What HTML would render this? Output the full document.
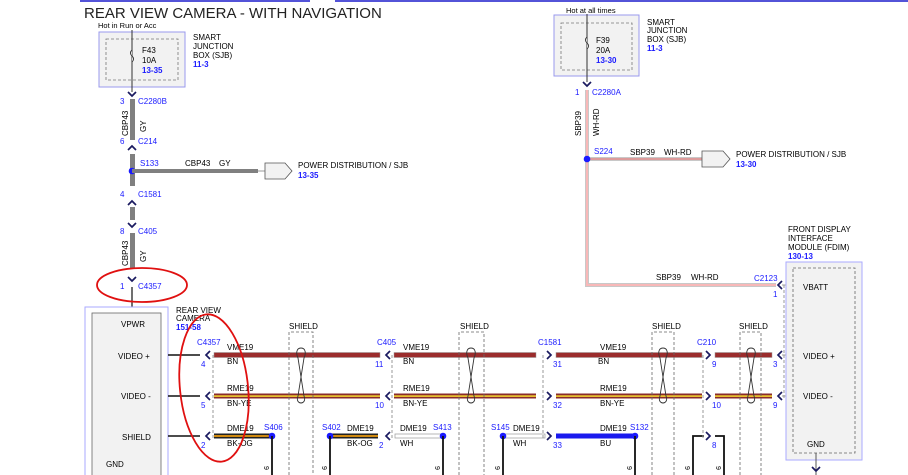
<!DOCTYPE html>
<html><head><meta charset="utf-8"><style>
html,body{margin:0;padding:0;background:#fff;width:908px;height:475px;overflow:hidden}
svg{display:block;font-family:"Liberation Sans",sans-serif}
.t{font-size:8px;fill:#000}
.b{font-size:8px;fill:#1a1aff}
.bb{font-size:8px;fill:#1a1aff;font-weight:bold}
</style></head><body>
<svg width="908" height="475" viewBox="0 0 908 475" xmlns="http://www.w3.org/2000/svg">
<defs>
<g id="arrL"><path d="M4,-4 L0,0 L4,4" fill="none" stroke="#1a1a60" stroke-width="1.7"/></g>
<g id="arrR"><path d="M-4,-4 L0,0 L-4,4" fill="none" stroke="#1a1a60" stroke-width="1.7"/></g>
<g id="arrD"><path d="M-4,-4 L0,0 L4,-4" fill="none" stroke="#1a1a60" stroke-width="1.7"/></g>
<g id="arrU"><path d="M-4,4 L0,0 L4,4" fill="none" stroke="#1a1a60" stroke-width="1.7"/></g>
</defs>
<line x1="80" y1="1" x2="310" y2="1" stroke="#1a1acc" stroke-width="1.5"/>
<line x1="335" y1="1" x2="908" y2="1" stroke="#1a1acc" stroke-width="1.5"/>
<text x="84" y="18" style="font-size:15px" fill="#222">REAR VIEW CAMERA - WITH NAVIGATION</text>

<text x="98" y="28" class="t" style="font-size:7.5px">Hot in Run or Acc</text>
<rect x="99" y="32" width="86" height="55" fill="#f2f2f2" stroke="#9999ee" stroke-width="1"/>
<rect x="106" y="39" width="72" height="41" fill="none" stroke="#777" stroke-dasharray="3,2" stroke-width="0.8"/>
<line x1="132" y1="30" x2="132" y2="92" stroke="#333" stroke-width="1"/>
<path d="M132,50 q-3,3 0,6 q3,3 0,6" fill="#f2f2f2" stroke="#333"/>
<text x="142" y="53" class="t">F43</text><text x="142" y="63" class="t">10A</text><text x="142" y="73" class="bb">13-35</text>
<text x="193" y="40" class="t">SMART</text><text x="193" y="49" class="t">JUNCTION</text><text x="193" y="58" class="t">BOX (SJB)</text><text x="193" y="67" class="bb">11-3</text>
<use href="#arrD" x="132" y="96"/>
<text x="120" y="104" class="b">3</text><text x="138" y="104" class="b">C2280B</text>
<rect x="130" y="99" width="5" height="41" fill="#808080"/>
<text class="t" transform="translate(128,136) rotate(-90)">CBP43</text>
<text class="t" transform="translate(146,132) rotate(-90)">GY</text>
<text x="120" y="144" class="b">6</text><text x="138" y="144" class="b">C214</text>
<use href="#arrU" x="132" y="146"/>
<rect x="130" y="154" width="5" height="32" fill="#808080"/>
<circle cx="132" cy="171" r="3.3" fill="#1a1aff"/>
<text x="140" y="166" class="b">S133</text>
<rect x="132" y="169" width="126" height="4" fill="#808080"/>
<line x1="258" y1="171" x2="265" y2="171" stroke="#999"/>
<path d="M265,163 L285,163 L292,171 L285,179 L265,179 Z" fill="#f2f2f2" stroke="#555" stroke-width="0.8"/>
<text x="185" y="166" class="t">CBP43</text><text x="219" y="166" class="t">GY</text>
<text x="298" y="168" class="t">POWER DISTRIBUTION / SJB</text><text x="298" y="178" class="bb">13-35</text>
<text x="120" y="197" class="b">4</text><text x="138" y="197" class="b">C1581</text>
<use href="#arrU" x="132" y="201"/>
<rect x="130" y="207" width="5" height="13" fill="#808080"/>
<use href="#arrD" x="132" y="227"/>
<text x="120" y="234" class="b">8</text><text x="138" y="234" class="b">C405</text>
<rect x="130" y="233" width="5" height="36" fill="#808080"/>
<text class="t" transform="translate(128,266) rotate(-90)">CBP43</text>
<text class="t" transform="translate(146,262) rotate(-90)">GY</text>
<use href="#arrD" x="132" y="281"/>
<text x="120" y="289" class="b">1</text><text x="138" y="289" class="b">C4357</text>
<line x1="132" y1="287" x2="132" y2="307" stroke="#111" stroke-width="1.2"/>
<ellipse cx="142" cy="285" rx="45" ry="17" fill="none" stroke="#e01010" stroke-width="1.8"/>

<rect x="85" y="307" width="83" height="170" fill="#fff" stroke="#aaaaff" stroke-width="1"/>
<rect x="92" y="313" width="69" height="165" fill="#f2f2f2" stroke="#666" stroke-width="0.8"/>
<text x="121" y="327" class="t">VPWR</text>
<text x="118" y="359" class="t">VIDEO +</text>
<text x="121" y="399" class="t">VIDEO -</text>
<text x="122" y="440" class="t">SHIELD</text>
<text x="106" y="467" class="t">GND</text>
<text x="176" y="313" class="t">REAR VIEW</text><text x="176" y="321" class="t">CAMERA</text><text x="176" y="330" class="bb">151-58</text>
<text x="197" y="345" class="b">C4357</text>
<g stroke="#111" stroke-width="1.6"><line x1="168" y1="355" x2="200" y2="355"/><line x1="168" y1="396" x2="200" y2="396"/><line x1="168" y1="436" x2="200" y2="436"/></g>
<use href="#arrL" x="206" y="355"/><use href="#arrL" x="206" y="396"/><use href="#arrL" x="206" y="436"/>
<text x="201" y="367" class="b">4</text><text x="201" y="408" class="b">5</text><text x="201" y="448" class="b">2</text>
<line x1="213" y1="355" x2="213" y2="440" stroke="#999" stroke-dasharray="3,2"/>

<g>
<rect x="214" y="352.5" width="166" height="5" fill="#9b2c2c" stroke="#999" stroke-width="0.5"/>
<rect x="394" y="352.5" width="142" height="5" fill="#9b2c2c" stroke="#999" stroke-width="0.5"/>
<rect x="556" y="352.5" width="146" height="5" fill="#9b2c2c" stroke="#999" stroke-width="0.5"/>
<rect x="715" y="352.5" width="57" height="5" fill="#9b2c2c" stroke="#999" stroke-width="0.5"/>
<rect x="214" y="393.5" width="166" height="5" fill="#8a2c2c"/><rect x="214" y="395.3" width="166" height="1.6" fill="#f0d030"/>
<rect x="394" y="393.5" width="142" height="5" fill="#8a2c2c"/><rect x="394" y="395.3" width="142" height="1.6" fill="#f0d030"/>
<rect x="556" y="393.5" width="146" height="5" fill="#8a2c2c"/><rect x="556" y="395.3" width="146" height="1.6" fill="#f0d030"/>
<rect x="715" y="393.5" width="57" height="5" fill="#8a2c2c"/><rect x="715" y="395.3" width="57" height="1.6" fill="#f0d030"/>
<rect x="214" y="433.5" width="58" height="5" fill="#222"/><rect x="214" y="435" width="58" height="2" fill="#d08a10"/>
<rect x="332" y="433.5" width="46" height="5" fill="#222"/><rect x="332" y="435" width="46" height="2" fill="#d08a10"/>
<rect x="395" y="434" width="48" height="4" fill="#fff" stroke="#999" stroke-width="0.7"/>
<rect x="503" y="434" width="42" height="4" fill="#fff" stroke="#999" stroke-width="0.7"/>
<rect x="556" y="433.5" width="79" height="5" fill="#1a1aee"/>
</g>
<circle cx="272" cy="436" r="3.3" fill="#1a1aff"/><circle cx="330" cy="436" r="3.3" fill="#1a1aff"/>
<circle cx="443" cy="436" r="3.3" fill="#1a1aff"/><circle cx="503" cy="436" r="3.3" fill="#1a1aff"/>
<circle cx="635" cy="436" r="3.3" fill="#1a1aff"/>
<g stroke="#111" stroke-width="1.8" fill="none">
<line x1="272" y1="436" x2="272" y2="475"/><line x1="330" y1="436" x2="330" y2="475"/>
<line x1="443" y1="436" x2="443" y2="475"/><line x1="503" y1="436" x2="503" y2="475"/>
<line x1="635" y1="436" x2="635" y2="475"/>
<path d="M693,475 L693,436 L704,436"/><path d="M715,436 L724,436 L724,475"/>
</g>
<g class="t" style="font-size:7px">
<text transform="translate(264,466) rotate(90)">9</text><text transform="translate(322,466) rotate(90)">9</text>
<text transform="translate(435,466) rotate(90)">9</text><text transform="translate(495,466) rotate(90)">9</text>
<text transform="translate(627,466) rotate(90)">9</text><text transform="translate(685,466) rotate(90)">9</text>
<text transform="translate(716,466) rotate(90)">9</text>
</g>
<text x="227" y="350" class="t">VME19</text><text x="227" y="364" class="t">BN</text>
<text x="227" y="391" class="t">RME19</text><text x="227" y="406" class="t">BN-YE</text>
<text x="227" y="431" class="t">DME19</text><text x="227" y="446" class="t">BK-OG</text>
<text x="264" y="430" class="b">S406</text>
<text x="322" y="430" class="b">S402</text><text x="347" y="431" class="t">DME19</text><text x="347" y="446" class="t">BK-OG</text>
<text x="400" y="431" class="t">DME19</text><text x="400" y="446" class="t">WH</text><text x="433" y="430" class="b">S413</text>
<text x="403" y="350" class="t">VME19</text><text x="403" y="364" class="t">BN</text>
<text x="403" y="391" class="t">RME19</text><text x="403" y="406" class="t">BN-YE</text>
<text x="491" y="430" class="b">S145</text><text x="513" y="431" class="t">DME19</text><text x="513" y="446" class="t">WH</text>
<text x="600" y="350" class="t">VME19</text><text x="598" y="364" class="t">BN</text>
<text x="600" y="391" class="t">RME19</text><text x="600" y="406" class="t">BN-YE</text>
<text x="600" y="431" class="t">DME19</text><text x="600" y="446" class="t">BU</text><text x="630" y="430" class="b">S132</text>

<g fill="none" stroke="#666" stroke-dasharray="3,2" stroke-width="0.8">
<path d="M289,475 V332 H313 V475"/><path d="M459,475 V332 H484 V475"/>
<path d="M652,475 V332 H674 V475"/><path d="M740,475 V332 H761 V475"/>
</g>
<g fill="none" stroke="#333" stroke-width="0.9">
<path d="M301,348 c-5,0 -5,6 -3,10 L304,396 c2,5 -1,7 -3,7 c-2,0 -5,-2 -3,-7 L304,358 c2,-4 2,-10 -3,-10z"/>
<path d="M471,348 c-5,0 -5,6 -3,10 L474,396 c2,5 -1,7 -3,7 c-2,0 -5,-2 -3,-7 L474,358 c2,-4 2,-10 -3,-10z"/>
<path d="M663,348 c-5,0 -5,6 -3,10 L666,396 c2,5 -1,7 -3,7 c-2,0 -5,-2 -3,-7 L666,358 c2,-4 2,-10 -3,-10z"/>
<path d="M751,348 c-5,0 -5,6 -3,10 L754,396 c2,5 -1,7 -3,7 c-2,0 -5,-2 -3,-7 L754,358 c2,-4 2,-10 -3,-10z"/>
</g>
<text x="289" y="329" class="t">SHIELD</text><text x="460" y="329" class="t">SHIELD</text>
<text x="652" y="329" class="t">SHIELD</text><text x="739" y="329" class="t">SHIELD</text>

<text x="377" y="345" class="b">C405</text>
<use href="#arrL" x="386" y="355"/><use href="#arrL" x="386" y="396"/><use href="#arrL" x="386" y="436"/>
<line x1="392" y1="355" x2="392" y2="440" stroke="#999" stroke-dasharray="3,2"/>
<text x="375" y="367" class="b">11</text><text x="375" y="408" class="b">10</text><text x="379" y="448" class="b">2</text>
<text x="538" y="345" class="b">C1581</text>
<use href="#arrR" x="551" y="355"/><use href="#arrR" x="551" y="396"/><use href="#arrR" x="551" y="436"/>
<line x1="543" y1="355" x2="543" y2="440" stroke="#999" stroke-dasharray="3,2"/>
<text x="553" y="367" class="b">31</text><text x="553" y="408" class="b">32</text><text x="553" y="448" class="b">33</text>
<text x="697" y="345" class="b">C210</text>
<use href="#arrR" x="710" y="355"/><use href="#arrR" x="710" y="396"/><use href="#arrR" x="710" y="436"/>
<line x1="703" y1="355" x2="703" y2="440" stroke="#999" stroke-dasharray="3,2"/>
<text x="712" y="367" class="b">9</text><text x="712" y="408" class="b">10</text><text x="712" y="448" class="b">8</text>
<use href="#arrL" x="778" y="285"/><use href="#arrL" x="778" y="355"/><use href="#arrL" x="778" y="396"/>
<g stroke="#888" stroke-width="0.8"><line x1="782" y1="285" x2="793" y2="285"/><line x1="782" y1="355" x2="793" y2="355"/><line x1="782" y1="396" x2="793" y2="396"/></g>
<line x1="784" y1="285" x2="784" y2="400" stroke="#999" stroke-dasharray="3,2"/>
<text x="773" y="297" class="b">1</text><text x="773" y="367" class="b">3</text><text x="773" y="408" class="b">9</text>
<text x="754" y="281" class="b">C2123</text>

<text x="788" y="232" class="t">FRONT DISPLAY</text><text x="788" y="241" class="t">INTERFACE</text>
<text x="788" y="250" class="t">MODULE (FDIM)</text><text x="788" y="259" class="bb">130-13</text>
<rect x="786" y="262" width="76" height="198" fill="#f2f2f2" stroke="#aaaaff" stroke-width="1"/>
<rect x="793" y="268" width="62" height="185" fill="none" stroke="#666" stroke-dasharray="3,2" stroke-width="0.8"/>
<text x="803" y="290" class="t">VBATT</text><text x="803" y="359" class="t">VIDEO +</text>
<text x="803" y="399" class="t">VIDEO -</text><text x="807" y="447" class="t">GND</text>
<line x1="816" y1="453" x2="816" y2="475" stroke="#555"/>
<use href="#arrD" x="816" y="471"/>

<text x="566" y="13" class="t" style="font-size:7.5px">Hot at all times</text>
<rect x="554" y="15" width="85" height="61" fill="#f2f2f2" stroke="#9999ee" stroke-width="1"/>
<rect x="561" y="23" width="71" height="47" fill="none" stroke="#777" stroke-dasharray="3,2" stroke-width="0.8"/>
<line x1="587" y1="14" x2="587" y2="82" stroke="#333"/>
<path d="M587,37 q-3,3 0,6 q3,3 0,6" fill="#f2f2f2" stroke="#333"/>
<text x="596" y="43" class="t">F39</text><text x="596" y="53" class="t">20A</text><text x="596" y="63" class="bb">13-30</text>
<text x="647" y="25" class="t">SMART</text><text x="647" y="33" class="t">JUNCTION</text><text x="647" y="42" class="t">BOX (SJB)</text><text x="647" y="51" class="bb">11-3</text>
<use href="#arrD" x="587" y="86"/>
<text x="575" y="95" class="b">1</text><text x="592" y="95" class="b">C2280A</text>
<path d="M587,90 V285 H776" fill="none" stroke="#c8c8c8" stroke-width="4"/>
<path d="M587,90 V285 H776" fill="none" stroke="#f8b8b8" stroke-width="2"/>
<text class="t" transform="translate(581,136) rotate(-90)">SBP39</text>
<text class="t" transform="translate(599,136) rotate(-90)">WH-RD</text>
<line x1="587" y1="159" x2="702" y2="159" stroke="#c8c8c8" stroke-width="4"/>
<line x1="587" y1="159" x2="702" y2="159" stroke="#e88080" stroke-width="1.2"/>
<circle cx="587" cy="159" r="3.3" fill="#1a1aff"/>
<text x="594" y="154" class="b">S224</text>
<text x="630" y="155" class="t">SBP39</text><text x="664" y="155" class="t">WH-RD</text>
<path d="M702,151 L723,151 L730,159 L723,167 L702,167 Z" fill="#f2f2f2" stroke="#555" stroke-width="0.8"/>
<text x="736" y="157" class="t">POWER DISTRIBUTION / SJB</text><text x="736" y="167" class="bb">13-30</text>
<text x="656" y="280" class="t">SBP39</text><text x="691" y="280" class="t">WH-RD</text>

<ellipse cx="214" cy="388" rx="34" ry="74" transform="rotate(-6 214 388)" fill="none" stroke="#e01010" stroke-width="1.8"/>
</svg>
</body></html>
